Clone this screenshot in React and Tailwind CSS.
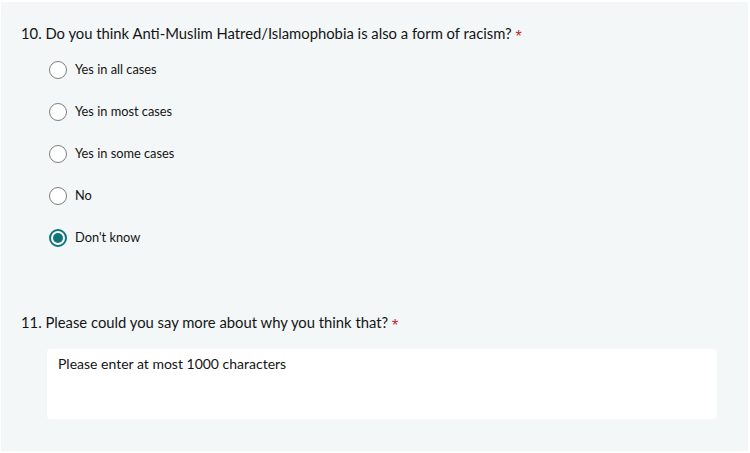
import React from "react";

const options = ["Yes in all cases", "Yes in most cases", "Yes in some cases", "No", "Don't know"];

function Radio({ checked }) {
  if (checked) {
    return (
      <span className="flex h-[18px] w-[18px] items-center justify-center rounded-full border-2 border-[#0e7479] bg-white">
        <span className="h-[10px] w-[10px] rounded-full bg-[#0e7479]" />
      </span>
    );
  }
  return <span className="block h-[18px] w-[18px] rounded-full border border-[#7d7d7d] bg-white" />;
}

function Star() {
  return (
    <span className="inline-block align-[-3px] text-[16px] leading-[0] text-[#c4262e]" style={{ fontFamily: "'Liberation Sans', sans-serif" }}>
      *
    </span>
  );
}

export default function App() {
  return (
    <div className="h-[453px] w-[750px] bg-white p-[2px] pl-px pr-[2px]" style={{ fontFamily: "Lato, 'Noto Sans', sans-serif" }}>
      <div className="h-full w-full bg-[#f3f7f8] text-[#141414]">
        <div className="pl-[20px] pt-[21px]">
          <h2 className="h-[20px] text-[14.8px] leading-[20px]">
            10. Do you think Anti-Muslim Hatred/Islamophobia is also a form of racism? <Star />
          </h2>
          <div className="mt-[18px] flex flex-col gap-[24px] pl-[28px]">
            {options.map((o, i) => (
              <label key={o} className="flex h-[18px] items-center gap-[8px] text-[12.8px]">
                <Radio checked={i === 4} />
                <span>{o}</span>
              </label>
            ))}
          </div>
        </div>
        <div className="pl-[20px] pt-[65px]">
          <h2 className="h-[20px] text-[14.8px] leading-[20px]">
            11. Please could you say more about why you think that? <Star />
          </h2>
          <div className="ml-[26px] mt-[17px] h-[70px] w-[670px] rounded-[4px] bg-white px-[11px] py-[6px] text-[14px] leading-[18px]">
            Please enter at most 1000 characters
          </div>
        </div>
      </div>
    </div>
  );
}
